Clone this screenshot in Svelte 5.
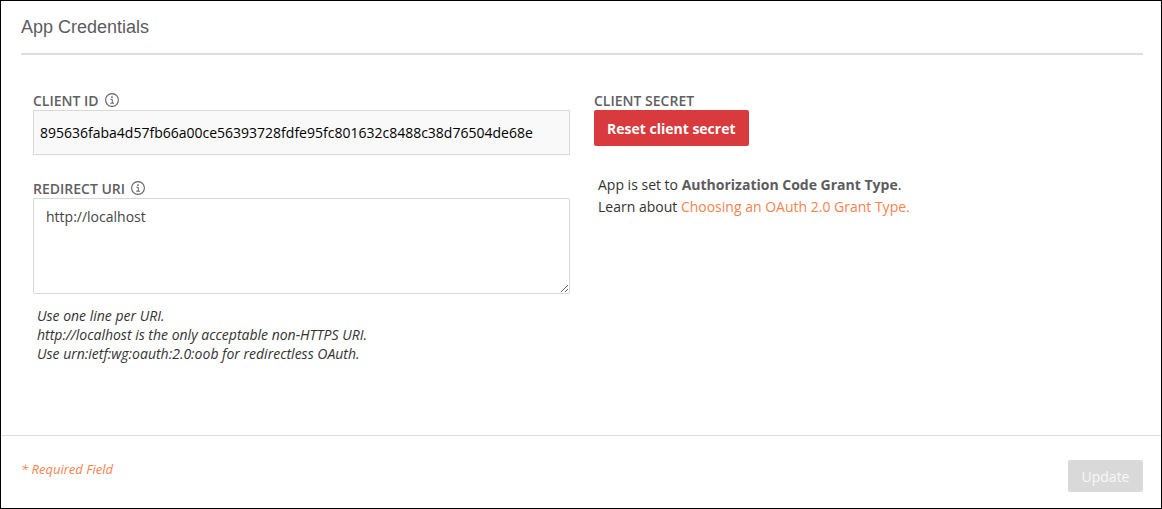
<script>
  let clientId = $state('895636faba4d57fb66a00ce56393728fdfe95fc801632c8488c38d76504de68e');
  let redirectUri = $state('http://localhost');
</script>

{#snippet info()}
  <svg class="info" viewBox="0 0 14 14" width="14" height="14" aria-hidden="true">
    <circle cx="7" cy="7" r="6.4" fill="none" stroke="currentColor" stroke-width="1.1" />
    <circle cx="7" cy="4.1" r="0.95" fill="currentColor" />
    <path d="M5.4 6.3h1.9v3.8M5.2 10.2h3.8" fill="none" stroke="currentColor" stroke-width="1" />
  </svg>
{/snippet}

<form class="panel">
  <section class="main">
    <h1>App Credentials</h1>
    <div class="columns">
      <div class="col">
        <label for="client-id">CLIENT ID {@render info()}</label>
        <input id="client-id" type="text" readonly bind:value={clientId} />
        <label class="second" for="redirect-uri">REDIRECT URI {@render info()}</label>
        <textarea id="redirect-uri" bind:value={redirectUri}></textarea>
        <p class="hint">
          Use one line per URI.<br />
          http://localhost is the only acceptable non-HTTPS URI.<br />
          Use urn:ietf:wg:oauth:2.0:oob for redirectless OAuth.
        </p>
      </div>
      <div class="col">
        <span class="label">CLIENT SECRET</span>
        <button type="button" class="reset">Reset client secret</button>
        <p class="grant">
          App is set to <strong>Authorization Code Grant Type</strong>.<br />
          Learn about <a href="#grant-types">Choosing an OAuth 2.0 Grant Type.</a>
        </p>
      </div>
    </div>
  </section>
  <footer>
    <span class="required">* Required Field</span>
    <button type="submit" class="update" disabled>Update</button>
  </footer>
</form>

<style>
  :global(body) { background: #fff; }
  .panel {
    box-sizing: border-box;
    min-height: 100vh;
    border: 1px solid #000;
    display: flex;
    flex-direction: column;
    font-family: "Open Sans", sans-serif;
    font-size: 14px;
    color: #333;
  }
  .main { flex: 1; padding: 12px 18px 0 20px; }
  h1 {
    margin: 0;
    padding-bottom: 12px;
    border-bottom: 2px solid #dedede;
    font: 400 18px/28px "Liberation Sans", Arial, sans-serif;
    color: #5c5c60;
  }
  .columns {
    display: grid;
    grid-template-columns: 1fr 1fr;
    gap: 24px;
    padding: 36px 12px 0;
  }
  .col { display: flex; flex-direction: column; align-items: flex-start; }
  label, .label {
    display: flex;
    align-items: center;
    gap: 6px;
    line-height: 19px;
    font-weight: 600;
    color: #5f6064;
  }
  .info { margin-bottom: 2px; }
  .second { margin-top: 24px; }
  input, textarea {
    box-sizing: border-box;
    width: 100%;
    margin: 0;
    border: 1px solid #d8d8d8;
    font: inherit;
  }
  input { height: 45px; padding: 0 6px; background: #f9f9f9; color: #000; }
  textarea { height: 96px; padding: 8px 12px; line-height: 20px; border-radius: 2px; color: #444; resize: both; }
  .hint { margin: 12px 4px 0; font-style: italic; line-height: 19px; color: #333; }
  button { border: 0; border-radius: 2px; font-family: inherit; }
  .reset { height: 36px; padding: 0 13px; background: #d93a3d; color: #fff; font-size: 14px; font-weight: 700; }
  .grant { margin: 28px 4px 0; line-height: 22px; }
  strong { color: #5c5c60; }
  a { color: #f5834f; text-decoration: none; }
  footer {
    display: flex;
    justify-content: space-between;
    padding: 24px 18px 16px 20px;
    border-top: 1px solid #dedede;
  }
  .required { font-size: 13px; font-style: italic; line-height: 18px; color: #f5834f; }
  .update { height: 32px; min-width: 75px; padding: 0 12px; background: #d9d9d9; color: #f8f8f8; font-size: 14px; }
</style>
